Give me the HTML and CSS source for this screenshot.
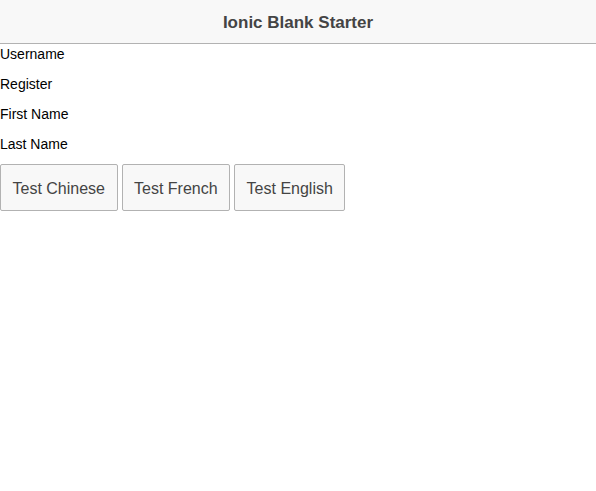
FILE: index.html
```html
<!DOCTYPE html>
<html>
<head>
<meta charset="utf-8">
<link rel="stylesheet" href="styles.css">
</head>
<body>
<header class="bar">
  <h1 class="title">Ionic Blank Starter</h1>
</header>
<main class="content">
  <p class="line">Username</p>
  <p class="line">Register</p>
  <p class="line">First Name</p>
  <p class="line">Last Name</p>
  <div class="buttons">
    <button class="btn">Test Chinese</button>
    <button class="btn">Test French</button>
    <button class="btn">Test English</button>
  </div>
</main>
</body>
</html>
```
FILE: styles.css
```css
html, body {
  margin: 0;
  padding: 0;
  background: #fff;
  font-family: "Liberation Sans", Arial, sans-serif;
  font-size: 14px;
  line-height: 20px;
  color: #000;
}
.bar {
  height: 43px;
  background: #f8f8f8;
  border-bottom: 1px solid #b2b2b2;
  display: flex;
  align-items: center;
  justify-content: center;
}
.title {
  margin: 0;
  padding-top: 2px;
  font-size: 17px;
  font-weight: bold;
  color: #444;
  line-height: 41px;
}
.content {
  display: flex;
  flex-direction: column;
}
.line {
  margin: 0 0 10px 0;
}
.buttons {
  display: flex;
  gap: 4px;
}
.btn {
  font-family: "Liberation Sans", Arial, sans-serif;
  font-size: 16px;
  color: #444;
  background: #f8f8f8;
  border: 1px solid #b2b2b2;
  border-radius: 2px;
  padding: 2px 11.5px 0;
  height: 47px;
  line-height: 43px;
}
```
